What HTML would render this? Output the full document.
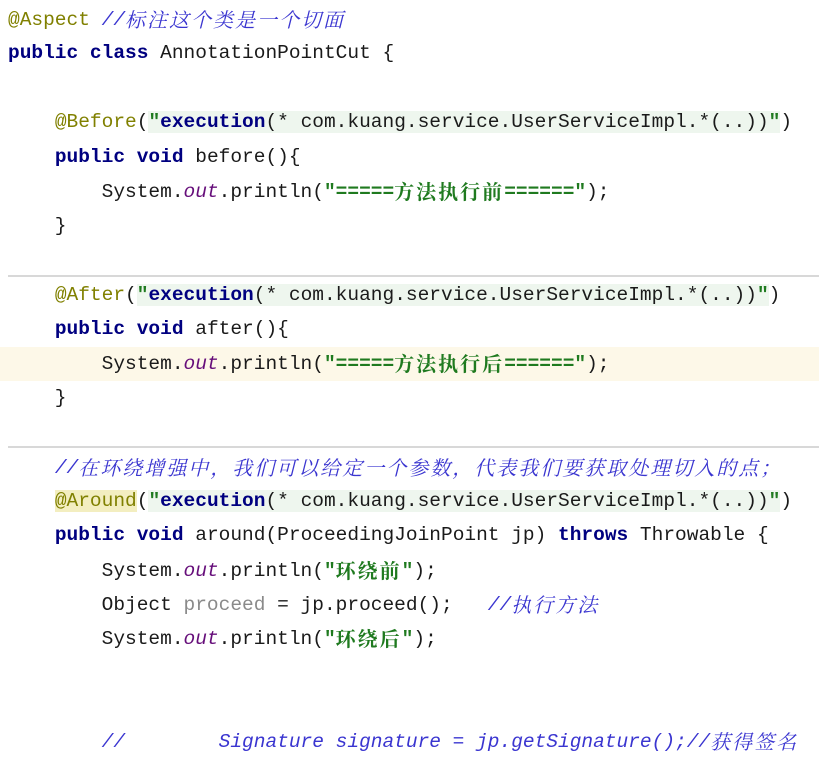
<!DOCTYPE html>
<html><head><meta charset="utf-8"><style>
body{margin:0;width:819px;height:761px;background:#fff;overflow:hidden;position:relative;font-family:"Liberation Mono","Noto Sans CJK SC",monospace;font-size:19.5px;color:#1a1a1a}
.l{position:absolute;left:8px;height:34px;line-height:34px;white-space:pre}
.k{color:#000080;font-weight:bold}
.a{color:#808000}
.s{color:#1f7a1f;font-weight:bold}
.cm{color:#3a35d0;font-style:italic}
.o{color:#660e7a;font-style:italic}
.g{color:#8a8a8a}
.x{color:#000080;font-weight:bold}
.bg{background:#eef6ee}
.c{font-family:"Noto Serif CJK SC","Noto Sans CJK SC",serif;font-size:20px;letter-spacing:2px;line-height:0;position:relative;top:2px}
.sep{position:absolute;left:8px;right:0;height:2px;background:#d8d8d8}
</style></head><body>
<div style="position:absolute;left:0;right:0;top:347px;height:34px;background:#fdf8e8"></div>
<div class="sep" style="top:275px"></div>
<div class="sep" style="top:446px"></div>
<div class="l" style="top:3px"><span class="a">@Aspect</span> <span class="cm">//<span class="c">标注这个类是一个切面</span></span></div>
<div class="l" style="top:36px"><span class="k">public class</span> AnnotationPointCut {</div>
<div class="l" style="top:105px">    <span class="a">@Before</span>(<span class="bg"><span class="s">"</span><span class="x">execution</span>(* com.kuang.service.UserServiceImpl.*(..))<span class="s">"</span></span>)</div>
<div class="l" style="top:140px">    <span class="k">public void</span> before(){</div>
<div class="l" style="top:175px">        System.<span class="o">out</span>.println(<span class="s">"=====<span class="c">方法执行前</span>======"</span>);</div>
<div class="l" style="top:209px">    }</div>
<div class="l" style="top:278px">    <span class="a">@After</span>(<span class="bg"><span class="s">"</span><span class="x">execution</span>(* com.kuang.service.UserServiceImpl.*(..))<span class="s">"</span></span>)</div>
<div class="l" style="top:312px">    <span class="k">public void</span> after(){</div>
<div class="l" style="top:347px">        System.<span class="o">out</span>.println(<span class="s">"=====<span class="c">方法执行后</span>======"</span>);</div>
<div class="l" style="top:381px">    }</div>
<div class="l" style="top:451px">    <span class="cm">//<span class="c">在环绕增强中，我们可以给定一个参数，代表我们要获取处理切入的点；</span></span></div>
<div class="l" style="top:484px">    <span class="a" style="background:#f3eec0">@Around</span>(<span class="bg"><span class="s">"</span><span class="x">execution</span>(* com.kuang.service.UserServiceImpl.*(..))<span class="s">"</span></span>)</div>
<div class="l" style="top:518px">    <span class="k">public void</span> around(ProceedingJoinPoint jp) <span class="k">throws</span> Throwable {</div>
<div class="l" style="top:554px">        System.<span class="o">out</span>.println(<span class="s">"<span class="c">环绕前</span>"</span>);</div>
<div class="l" style="top:588px">        Object <span class="g">proceed</span> = jp.proceed();   <span class="cm">//<span class="c">执行方法</span></span></div>
<div class="l" style="top:622px">        System.<span class="o">out</span>.println(<span class="s">"<span class="c">环绕后</span>"</span>);</div>
<div class="l" style="top:725px">        <span class="cm">//        Signature signature = jp.getSignature();//<span class="c">获得签名</span></span></div>
</body></html>
